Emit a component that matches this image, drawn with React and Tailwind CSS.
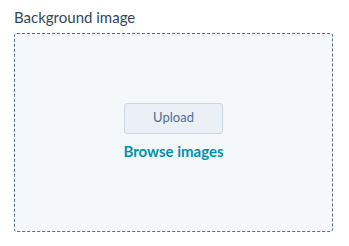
export default function App() {
  return (
    <div className="w-[349px] h-[246px] bg-white pl-[14px] pr-[16px] pt-[7px]" style={{ fontFamily: "Lato, 'Open Sans', sans-serif" }}>
      <div className="text-[15px] leading-[20px] text-[#33475b]">Background image</div>
      <div className="mt-[6px] h-[199px] w-[319px] rounded-[3px] border border-dashed border-[#516f90] bg-[#f5f8fa] flex flex-col items-center justify-center">
        <button className="w-[99px] h-[31px] rounded-[3px] border border-[#cbd6e2] bg-[#eaf0f6] text-[13px] text-[#506e91] mt-[-3px]">Upload</button>
        <div className="mt-[8px] text-[15px] font-bold leading-[18px] text-[#0091ae]">Browse images</div>
      </div>
    </div>
  );
}
